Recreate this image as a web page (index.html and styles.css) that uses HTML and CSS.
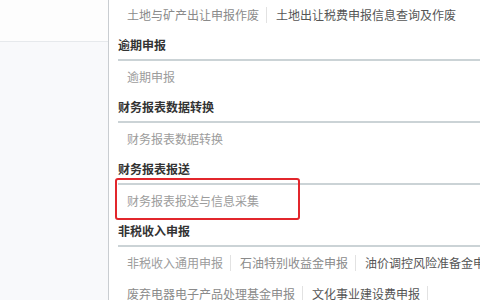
FILE: index.html
```
<!DOCTYPE html>
<html lang="zh-CN">
<head>
    <meta charset="UTF-8">
    <meta name="viewport" content="width=device-width, initial-scale=1.0">
    <title>申报菜单</title>
    <link rel="stylesheet" href="styles.css">
</head>
<body>
    <div class="page">
        <div class="sidebar">
            <div class="sidebar-top"></div>
            <div class="sidebar-rest"></div>
        </div>

        <div class="main">
            <div class="item-row first">
                <a class="item">土地与矿产出让申报作废</a>
                <span class="sep"></span>
                <a class="item dark">土地出让税费申报信息查询及作废</a>
            </div>

            <div class="group">
                <div class="group-title">逾期申报</div>
                <div class="item-row">
                    <a class="item light">逾期申报</a>
                </div>
            </div>

            <div class="group">
                <div class="group-title">财务报表数据转换</div>
                <div class="item-row">
                    <a class="item light">财务报表数据转换</a>
                </div>
            </div>

            <div class="group">
                <div class="group-title">财务报表报送</div>
                <div class="item-row">
                    <a class="item light">财务报表报送与信息采集</a>
                    <div class="highlight"></div>
                </div>
            </div>

            <div class="group">
                <div class="group-title">非税收入申报</div>
                <div class="item-row">
                    <a class="item light">非税收入通用申报</a>
                    <span class="sep"></span>
                    <a class="item">石油特别收益金申报</a>
                    <span class="sep"></span>
                    <a class="item dark">油价调控风险准备金申报</a>
                </div>
                <div class="item-row">
                    <a class="item">废弃电器电子产品处理基金申报</a>
                    <span class="sep"></span>
                    <a class="item dark">文化事业建设费申报</a>
                    <span class="sep"></span>
                </div>
            </div>
        </div>
    </div>
</body>
</html>
```

FILE: styles.css
```
body {
    margin: 0;
    font-family: "Noto Sans CJK SC", "Noto Sans", sans-serif;
    font-size: 12px;
    background-color: white;
    overflow: hidden;
}

.page {
    display: flex;
    width: 480px;
    height: 300px;
    overflow: hidden;
}

/* Left column */
.sidebar {
    width: 108px;
    flex-shrink: 0;
    display: flex;
    flex-direction: column;
    border-right: 1px solid #c9cdd1;
    background-color: #fafbfc;
}

.sidebar-top {
    height: 41px;
    background-color: #fdfdfd;
    border-bottom: 1px solid #e6e9ec;
}

.sidebar-rest {
    flex: 1;
    background-color: #f8f9fb;
}

/* Right column */
.main {
    flex: 1;
    padding-left: 9px;
    overflow: hidden;
}

.group-title {
    height: 29px;
    line-height: 30px;
    font-weight: bold;
    color: #333;
    border-bottom: 2px solid #cbd3d6;
    white-space: nowrap;
}

.item-row {
    position: relative;
    display: flex;
    align-items: center;
    height: 31px;
    white-space: nowrap;
}

.item-row.first {
    margin-top: -1px;
}

.item {
    padding: 0 7px 0 9px;
    color: #8a8a8a;
    line-height: 16px;
    cursor: pointer;
}

.item.light {
    color: #9c9c9c;
}

.item.dark {
    color: #555;
}

.sep {
    display: inline-block;
    width: 1px;
    height: 16px;
    background-color: #e2e2e2;
    flex-shrink: 0;
}

/* Red box drawn around the selected entry */
.highlight {
    position: absolute;
    left: -3px;
    top: -7px;
    width: 181px;
    height: 38px;
    border: 2px solid #e2262c;
    border-radius: 3px;
    pointer-events: none;
}
```
